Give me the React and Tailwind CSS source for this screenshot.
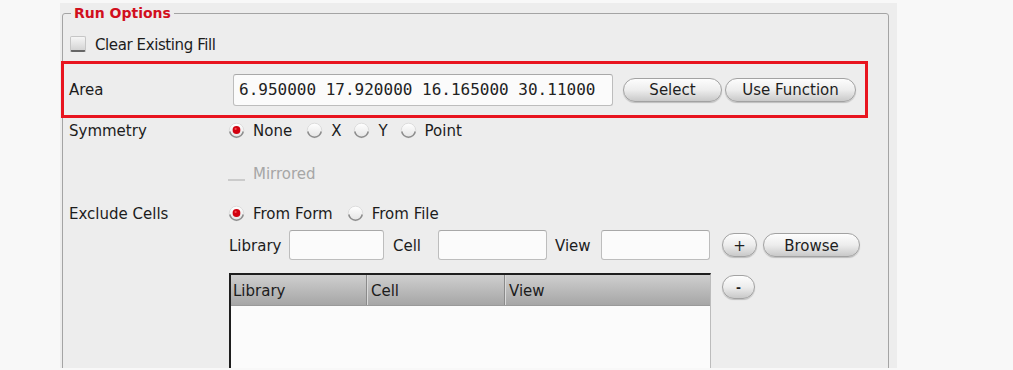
import React from "react";

function Radio({ checked }) {
  return (
    <svg width="17" height="17" viewBox="0 0 17 17" className="shrink-0">
      <defs>
        <linearGradient id={checked ? "rgc" : "rgu"} x1="0" y1="0" x2="0" y2="1">
          <stop offset="0" stopColor="#ffffff" />
          <stop offset="1" stopColor="#e4e4e4" />
        </linearGradient>
      </defs>
      <circle cx="8.5" cy="8.5" r="7.3" fill={`url(#${checked ? "rgc" : "rgu"})`} stroke="#d6d6d6" strokeWidth="0.8" />
      <path d="M1.8 9.5 A6.8 6.8 0 0 0 15.2 9.5" fill="none" stroke="#8c8c8c" strokeWidth="1.5" />
      {checked && <circle cx="8.5" cy="8" r="3.9" fill="#d2000f" />}
      {checked && <circle cx="7.6" cy="6.9" r="1.1" fill="#ff6a6a" opacity="0.7" />}
    </svg>
  );
}

function RadioItem({ checked, label, className = "" }) {
  return (
    <div className={`flex items-center gap-[8px] ${className}`}>
      <Radio checked={checked} />
      <span className="leading-[17px] pt-[2px]">{label}</span>
    </div>
  );
}

function Btn({ children, className = "" }) {
  return (
    <div
      className={`flex items-center justify-center h-[24px] rounded-full border border-[#a2a2a2] bg-gradient-to-b from-[#fdfdfd] via-[#ededed] to-[#c9c9c9] shadow-[0_1px_1px_rgba(0,0,0,0.2)] text-[#1e1e1e] ${className}`}
    >
      <span className="leading-[17px] pt-[2px]">{children}</span>
    </div>
  );
}

function Input({ className = "", children }) {
  return (
    <div
      className={`bg-[#fbfbfb] border border-[#bdbdbd] border-t-[#a8a8a8] rounded-[3px] ${className}`}
    >
      {children}
    </div>
  );
}

const lbl = "leading-[17px] pt-[2px]";

export default function App() {
  return (
    <div className="w-[1013px] h-[370px] bg-[#f8f8f8] overflow-hidden font-['DejaVu_Sans','Liberation_Sans',sans-serif] text-[15px] text-[#1c1c1c]">
      <div className="mt-[3px] ml-[60px] w-[837px] h-[365px] bg-[#ededed] overflow-hidden">
        <fieldset className="m-0 p-0 mt-[1px] ml-[2px] w-[827px] min-w-0 h-[420px] border border-[#a4a4a4] rounded-[3px]">
          <legend className="ml-[8px] px-[3px] p-0 leading-[18px] text-[14px] font-bold text-[#d10f1d]">
            Run Options
          </legend>

          {/* Clear Existing Fill */}
          <div className="flex items-center h-[16px] mt-[14px] pl-[7px] gap-[9px]">
            <div className="w-[16px] h-[16px] rounded-[2px] border border-[#c6c6c6] border-b-2 border-b-[#666666] bg-gradient-to-b from-[#f6f6f6] to-[#d4d4d4]" />
            <span className={`${lbl} tracking-[-0.4px]`}>Clear Existing Fill</span>
          </div>

          {/* Area (highlighted) */}
          <div className="mt-[9px] ml-[-2px] w-[807px] h-[57px] border-[3px] border-[#e8151f] flex items-center">
            <div className={`w-[169px] pl-[5px] ${lbl}`}>Area</div>
            <Input className="w-[380px] h-[32px] flex items-center pl-[5px]">
              <span className="font-['DejaVu_Sans_Mono','Liberation_Mono',monospace] text-[16px] leading-[18px] pt-[1px] text-[#222] whitespace-pre">
                6.950000 17.920000 16.165000 30.11000
              </span>
            </Input>
            <Btn className="ml-[10px] w-[99px]">Select</Btn>
            <Btn className="ml-[3px] w-[131px]">Use Function</Btn>
          </div>

          {/* Symmetry */}
          <div className="flex items-center h-[24px]">
            <div className={`w-[165px] pl-[6px] ${lbl}`}>Symmetry</div>
            <RadioItem checked label="None" />
            <RadioItem label="X" className="ml-[14px]" />
            <RadioItem label="Y" className="ml-[12px]" />
            <RadioItem label="Point" className="ml-[12px]" />
          </div>

          {/* Mirrored */}
          <div className="flex items-center h-[22px] mt-[20px]">
            <div className="w-[165px]" />
            <div className="flex items-center gap-[8px]">
              <div className="w-[17px] h-[14px] mt-[2px] border-b-2 border-b-[#cbcbcb]" />
              <span className={`${lbl} text-[#a6a6a6]`}>Mirrored</span>
            </div>
          </div>

          {/* Exclude Cells */}
          <div className="flex items-center h-[24px] mt-[17px]">
            <div className={`w-[165px] pl-[6px] ${lbl}`}>Exclude Cells</div>
            <RadioItem checked label="From Form" />
            <RadioItem label="From File" className="ml-[14px]" />
          </div>

          {/* Library / Cell / View */}
          <div className="flex items-center h-[30px] mt-[5px] ml-[166px]">
            <div className={`w-[60px] ${lbl}`}>Library</div>
            <Input className="w-[95px] h-[30px]" />
            <div className={`w-[54px] pl-[9px] ${lbl}`}>Cell</div>
            <Input className="w-[109px] h-[30px]" />
            <div className={`w-[54px] pl-[8px] ${lbl}`}>View</div>
            <Input className="w-[109px] h-[30px]" />
            <Btn className="ml-[12px] w-[35px] h-[23px]">+</Btn>
            <Btn className="ml-[6px] w-[97px] h-[23px]">Browse</Btn>
          </div>

          {/* Table */}
          <div className="flex items-start mt-[13px] ml-[166px]">
            <div className="w-[482px] h-[200px] border-t-2 border-l-2 border-[#1e1e1e] border-r border-r-[#bcbcbc] bg-[#fbfbfb]">
              <div className="flex h-[31px] bg-gradient-to-b from-[#cfcfcf] to-[#a6a6a6] border-b border-b-[#9a9a9a]">
                <div className="w-[136px] pl-[2px] flex items-center border-r border-r-[#8a8a8a]"><span className={lbl}>Library</span></div>
                <div className="w-[1px] bg-[#dadada]" />
                <div className="w-[137px] pl-[3px] flex items-center border-r border-r-[#8a8a8a]"><span className={lbl}>Cell</span></div>
                <div className="w-[1px] bg-[#dadada]" />
                <div className="flex-1 pl-[3px] flex items-center"><span className={lbl}>View</span></div>
              </div>
            </div>
            <Btn className="ml-[11px] mt-[2px] w-[33px] h-[24px] text-[12px] font-bold">-</Btn>
          </div>
        </fieldset>
      </div>
    </div>
  );
}
